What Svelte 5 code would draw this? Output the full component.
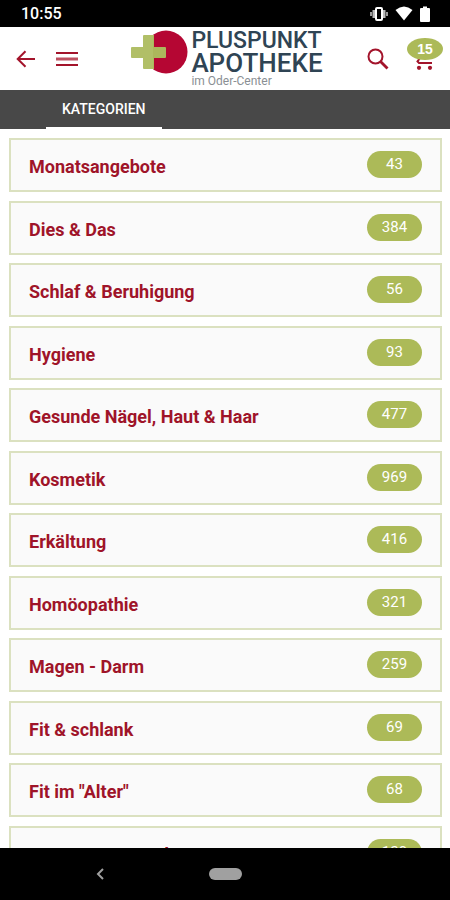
<script>
  const categories = [
    { name: 'Monatsangebote', count: 43 },
    { name: 'Dies & Das', count: 384 },
    { name: 'Schlaf & Beruhigung', count: 56 },
    { name: 'Hygiene', count: 93 },
    { name: 'Gesunde Nägel, Haut & Haar', count: 477 },
    { name: 'Kosmetik', count: 969 },
    { name: 'Erkältung', count: 416 },
    { name: 'Homöopathie', count: 321 },
    { name: 'Magen - Darm', count: 259 },
    { name: 'Fit & schlank', count: 69 },
    { name: 'Fit im "Alter"', count: 68 },
    { name: 'Augen, Nase & Ohr', count: 120 }
  ];
</script>

<div class="screen">
  <div class="status">
    <span class="time">10:55</span>
    <span class="indicators">
      <svg width="18" height="14" viewBox="0 0 18 14" aria-hidden="true">
        <path d="M1 5v4M17 5v4" stroke="#999" stroke-width="2" />
        <path d="M4 3v8M14 3v8" stroke="#bbb" stroke-width="3" />
        <rect x="6" y="1" width="6" height="12" rx="1" fill="#000" stroke="#fff" stroke-width="2" />
      </svg>
      <svg width="18" height="15" viewBox="0 0 18 15" aria-hidden="true">
        <path d="M0.500 4Q9-3 17.500 4L9 14.500z" fill="#fff" />
      </svg>
      <svg width="10" height="16" viewBox="0 0 10 16" aria-hidden="true">
        <path d="M3 .5h4V2h2q1 0 1 1v12q0 1-1 1H1q-1 0-1-1V3q0-1 1-1h2z" fill="#fff" />
      </svg>
    </span>
  </div>

  <header>
    <div class="side">
      <button aria-label="Zurück">
        <svg width="20" height="18" viewBox="0 0 20 18">
          <path d="M19 9H2M9.500 1.200L1.700 9l7.800 7.800" fill="none" stroke="#a3142b" stroke-width="2" />
        </svg>
      </button>
      <button aria-label="Menü">
        <svg width="22" height="16" viewBox="0 0 22 16">
          <path d="M0 2h22M0 14h22" stroke="#a3142b" stroke-width="2" />
          <path d="M0 8h22" stroke="#bd5060" stroke-width="3" />
        </svg>
      </button>
    </div>
    <a class="brand" href="#start">
      <svg width="57" height="44" viewBox="0 0 57 44" aria-hidden="true">
        <circle cx="35" cy="22" r="21.500" fill="#b50633" />
        <path d="M13 5h10v34H13q-1 0-1-1V28H1q-1 0-1-1V18q0-1 1-1h11V6q0-1 1-1z" fill="#b1bf67" />
        <path d="M22 5v34q1 0 1-1V28h11q1 0 1-1V18q0-1-1-1H23V6q0-1-1-1z" fill="#acb75c" />
      </svg>
      <span class="words">
        <span class="upper">PLUSPUNKT</span>
        <span class="lower">APOTHEKE</span>
        <span class="place">im Oder-Center</span>
      </span>
    </a>
    <div class="side end">
      <button aria-label="Suche">
        <svg width="22" height="22" viewBox="0 0 22 22">
          <circle cx="8.500" cy="8.500" r="7" fill="none" stroke="#a3142b" stroke-width="2" />
          <path d="M13.500 13.500L20.500 20.500" stroke="#a3142b" stroke-width="2.800" />
        </svg>
      </button>
      <button class="cart" aria-label="Warenkorb, 15 Artikel">
        <svg width="22" height="22" viewBox="0 0 22 22">
          <path d="M1 1h3l4 8h8l4-7M7 10l-2.500 3.500L6 15h13" fill="none" stroke="#a3142b" stroke-width="2" />
          <circle cx="6" cy="19.800" r="2.100" fill="#a3142b" />
          <circle cx="17" cy="19.800" r="2.100" fill="#a3142b" />
        </svg>
        <span class="badge">15</span>
      </button>
    </div>
  </header>

  <nav class="tabs"><a href="#kategorien">KATEGORIEN</a></nav>

  <main>
    <ul>
      {#each categories as category}
        <li>
          <a href="#kategorie">
            <span>{category.name}</span>
            <span class="count">{category.count}</span>
          </a>
        </li>
      {/each}
    </ul>
  </main>

  <div class="system">
    <button class="back" aria-label="Zurück (System)">
      <svg width="8" height="12" viewBox="0 0 8 12">
        <path d="M7 1L2 6l5 5" fill="none" stroke="#a0a0a0" stroke-width="2" />
      </svg>
    </button>
    <button class="home" aria-label="Startbildschirm"></button>
    <span></span>
  </div>
</div>

<style>
  :global(body) {
    margin: 0;
  }
  .screen {
    display: flex;
    flex-direction: column;
    height: 100vh;
    overflow: hidden;
    background: #fff;
    font-family: Roboto, "Liberation Sans", sans-serif;
  }
  a {
    color: inherit;
    text-decoration: none;
  }
  button {
    display: flex;
    padding: 0;
    border: 0;
    background: none;
  }
  svg {
    display: block;
    flex: none;
  }
  .status {
    display: flex;
    align-items: center;
    justify-content: space-between;
    flex: none;
    height: 27px;
    padding: 0 20px 0 21px;
    background: #000;
    color: #fff;
  }
  .time {
    font-size: 16px;
    font-weight: 500;
    line-height: 30px;
  }
  .indicators {
    display: flex;
    align-items: center;
    gap: 7px;
  }
  header {
    display: grid;
    grid-template-columns: 1fr auto 1fr;
    flex: none;
    height: 63px;
    padding: 0 15px 0 16px;
  }
  .side {
    display: flex;
    align-items: center;
    gap: 20px;
  }
  .end {
    justify-content: flex-end;
    gap: 24px;
  }
  .brand {
    display: flex;
    gap: 3px;
    padding: 3px 0 0 3px;
  }
  .words {
    display: flex;
    flex-direction: column;
    color: #2f4454;
    font-weight: 500;
  }
  .upper {
    font-size: 23px;
    line-height: 21px;
  }
  .lower {
    font-size: 26px;
    line-height: 24px;
  }
  .place {
    color: #8a8f94;
    font-size: 12px;
    font-weight: 400;
    line-height: 12px;
  }
  .cart {
    position: relative;
  }
  .badge {
    position: absolute;
    top: -10px;
    left: -6px;
    width: 36px;
    height: 22px;
    border-radius: 50%;
    background: #acba58;
    color: #fff;
    font-size: 14px;
    font-weight: 700;
    line-height: 22px;
    text-align: center;
  }
  .tabs {
    display: flex;
    flex: none;
    height: 39px;
    padding-left: 46px;
    background: #484848;
  }
  .tabs a {
    box-sizing: border-box;
    padding: 0 16px;
    border-bottom: 2px solid #fff;
    color: #fff;
    font-size: 14px;
    font-weight: 500;
    line-height: 39px;
  }
  main {
    flex: 1;
    min-height: 0;
    overflow: hidden;
    padding: 9px 8px 0 9px;
  }
  ul {
    margin: 0;
    padding: 0;
    list-style: none;
  }
  li {
    margin-bottom: 8px;
  }
  li:nth-child(odd) {
    margin-bottom: 9px;
  }
  li a {
    display: flex;
    align-items: center;
    justify-content: space-between;
    box-sizing: border-box;
    height: 54px;
    padding: 4px 18px 0;
    border: 2px solid #dbe1c0;
    background: #fafafa;
    color: #9f1429;
    font-size: 18px;
    font-weight: 700;
    line-height: 24px;
  }
  .count {
    width: 55px;
    margin-bottom: 5px;
    border-radius: 14px;
    background: #acba58;
    color: #fff;
    font-size: 15px;
    font-weight: 400;
    line-height: 27px;
    text-align: center;
  }
  .system {
    display: grid;
    grid-template-columns: 1fr auto 1fr;
    align-items: center;
    flex: none;
    height: 52px;
    background: #000;
  }
  .back {
    justify-self: center;
    margin-right: 8px;
  }
  .home {
    width: 33px;
    height: 12px;
    border-radius: 6px;
    background: #a0a0a0;
  }
</style>
